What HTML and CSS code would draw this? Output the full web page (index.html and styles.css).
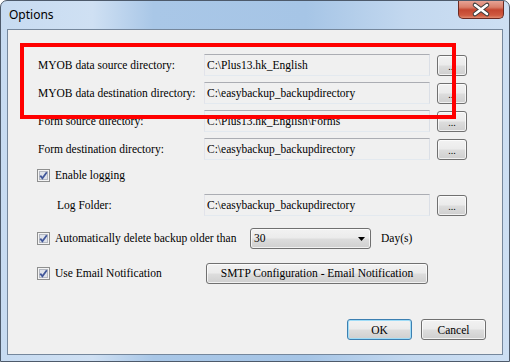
FILE: index.html
```html
<!DOCTYPE html>
<html>
<head>
<meta charset="utf-8">
<link rel="stylesheet" href="styles.css">
</head>
<body>
<div class="window">
  <div class="titlebar">
    <span class="title">Options</span>
    <div class="close">
      <svg width="46" height="19" viewBox="0 0 46 19">
        <path d="M17 5 L29 14 M29 5 L17 14" stroke="#3b3b3b" stroke-width="4.6" stroke-linecap="round"/>
        <path d="M17 5 L29 14 M29 5 L17 14" stroke="#ffffff" stroke-width="2.6" stroke-linecap="round"/>
      </svg>
    </div>
  </div>
  <div class="client">
    <div class="rows">
      <div class="row">
        <span class="label">MYOB data source directory:</span>
        <div class="field">C:\Plus13.hk_English</div>
        <button class="btn browse">...</button>
      </div>
      <div class="row">
        <span class="label">MYOB data destination directory:</span>
        <div class="field">C:\easybackup_backupdirectory</div>
        <button class="btn browse">...</button>
      </div>
      <div class="row">
        <span class="label">Form source directory:</span>
        <div class="field">C:\Plus13.hk_English\Forms</div>
        <button class="btn browse">...</button>
      </div>
      <div class="row">
        <span class="label">Form destination directory:</span>
        <div class="field">C:\easybackup_backupdirectory</div>
        <button class="btn browse">...</button>
      </div>
      <div class="row row-logging">
        <span class="check"><svg width="13" height="13" viewBox="0 0 13 13"><rect x="0.5" y="0.5" width="12" height="12" fill="#f4f4f4" stroke="#8e8f8f"/><rect x="2.5" y="2.5" width="8" height="8" fill="#dfe3ea" stroke="#b4b8c2"/><path d="M3.3 6.6 L5.4 9.2 L9.8 3.2" fill="none" stroke="#41579a" stroke-width="1.8"/></svg></span>
        <span class="check-label">Enable logging</span>
      </div>
      <div class="row row-log">
        <span class="label indent">Log Folder:</span>
        <div class="field">C:\easybackup_backupdirectory</div>
        <button class="btn browse">...</button>
      </div>
      <div class="row row-auto">
        <span class="check"><svg width="13" height="13" viewBox="0 0 13 13"><rect x="0.5" y="0.5" width="12" height="12" fill="#f4f4f4" stroke="#8e8f8f"/><rect x="2.5" y="2.5" width="8" height="8" fill="#dfe3ea" stroke="#b4b8c2"/><path d="M3.3 6.6 L5.4 9.2 L9.8 3.2" fill="none" stroke="#41579a" stroke-width="1.8"/></svg></span>
        <span class="check-label auto-label">Automatically delete backup older than</span>
        <div class="combo"><span>30</span><svg width="7" height="4" viewBox="0 0 7 4"><path d="M0 0 H7 L3.5 4 Z" fill="#000"/></svg></div>
        <span class="days">Day(s)</span>
      </div>
      <div class="row row-email">
        <span class="check"><svg width="13" height="13" viewBox="0 0 13 13"><rect x="0.5" y="0.5" width="12" height="12" fill="#f4f4f4" stroke="#8e8f8f"/><rect x="2.5" y="2.5" width="8" height="8" fill="#dfe3ea" stroke="#b4b8c2"/><path d="M3.3 6.6 L5.4 9.2 L9.8 3.2" fill="none" stroke="#41579a" stroke-width="1.8"/></svg></span>
        <span class="check-label email-label">Use Email Notification</span>
        <button class="btn smtp">SMTP Configuration - Email Notification</button>
      </div>
    </div>
    <div class="footer">
      <button class="btn ok">OK</button>
      <button class="btn cancel">Cancel</button>
    </div>
    <div class="highlight"></div>
  </div>
</div>
</body>
</html>
```
FILE: styles.css
```css
html, body {
  margin: 0;
  padding: 0;
  background: #ffffff;
}
.window {
  width: 510px;
  height: 362px;
  box-sizing: border-box;
  border: 1px solid #4d5a6b;
  border-radius: 7px 7px 0 0;
  padding: 0 6px 6px 6px;
  display: flex;
  flex-direction: column;
  background: linear-gradient(90deg, #c7dbf1 0%, #cfe0f3 18%, #a9c7e7 30%, #a6c5e6 60%, #c3d8ef 80%, #cddff3 100%);
  overflow: hidden;
}
.titlebar {
  height: 28px;
  flex: none;
  display: flex;
  align-items: flex-start;
  justify-content: space-between;
}
.title {
  font-family: "Noto Sans", "Open Sans", sans-serif;
  font-size: 12px;
  color: #000;
  margin-top: 5px;
  margin-left: 2px;
}
.close {
  width: 46px;
  height: 19px;
  margin-top: -1px;
  margin-right: -1px;
  box-sizing: border-box;
  border: 1px solid #6b2a22;
  border-top: none;
  border-radius: 0 0 5px 5px;
  background: linear-gradient(180deg, #e9a99c 0%, #d97e6a 40%, #c44630 55%, #cf5a40 85%, #e08a6f 100%);
  display: flex;
  align-items: center;
  justify-content: center;
}
.close svg {
  display: block;
  margin: -1px;
}
.client {
  position: relative;
  flex: 1;
  border: 1px solid #75879c;
  background: #f0f0f0;
  display: flex;
  flex-direction: column;
  font-family: "Liberation Serif", "Times New Roman", serif;
  font-size: 11.5px;
  color: #000;
}
.rows {
  padding: 24px 0 0 30px;
  display: flex;
  flex-direction: column;
  gap: 6px;
}
.row {
  height: 22px;
  display: flex;
  align-items: center;
}
.row-logging { margin-top: -2px; }
.row-log { margin-top: 2px; }
.row-auto { margin-top: 5px; }
.row-email { margin-top: 7px; }
.label {
  width: 166px;
  flex: none;
  white-space: nowrap;
}
.label.indent {
  padding-left: 19px;
  box-sizing: border-box;
}
.field {
  width: 226px;
  height: 22px;
  box-sizing: border-box;
  border: 1px solid;
  border-color: #abadb3 #dbdfe6 #e3e9ef #e2e3ea;
  background: #f0f0f0;
  padding: 0 0 0 2px;
  display: flex;
  align-items: center;
  white-space: nowrap;
  overflow: hidden;
}
.btn {
  font-family: "Liberation Serif", "Times New Roman", serif;
  font-size: 11.5px;
  color: #000;
  height: 21px;
  box-sizing: border-box;
  border: 1px solid #707070;
  border-radius: 3px;
  background: linear-gradient(180deg, #f2f2f2 0%, #ebebeb 48%, #dddddd 52%, #cfcfcf 100%);
  box-shadow: inset 0 0 0 1px rgba(255,255,255,0.7);
  padding: 0;
  display: flex;
  align-items: center;
  justify-content: center;
}
.browse {
  width: 30px;
  margin-left: 7px;
  flex: none;
  font-size: 10px;
  padding-top: 3px;
}
.check {
  width: 13px;
  height: 13px;
  margin-left: -1px;
  flex: none;
}
.check svg { display: block; }
.check-label {
  margin-left: 5px;
  white-space: nowrap;
}
.auto-label {
  width: 195px;
  flex: none;
}
.email-label {
  width: 151px;
  flex: none;
}
.combo {
  width: 121px;
  height: 21px;
  box-sizing: border-box;
  border: 1px solid #707070;
  border-radius: 3px;
  background: linear-gradient(180deg, #f2f2f2 0%, #ebebeb 48%, #dddddd 52%, #cfcfcf 100%);
  box-shadow: inset 0 0 0 1px rgba(255,255,255,0.7);
  display: flex;
  align-items: center;
  justify-content: space-between;
  padding: 0 5px 0 3px;
  flex: none;
}
.combo svg { display: block; margin-top: 2px; }
.days {
  margin-left: 10px;
}
.smtp {
  width: 222px;
  flex: none;
}
.footer {
  margin-top: auto;
  display: flex;
  justify-content: flex-end;
  gap: 9px;
  padding: 0 16px 14px 0;
}
.ok, .cancel {
  width: 65px;
}
.ok {
  border-color: #3c7fb1;
  box-shadow: inset 0 0 0 1px #9fdcf7;
}
.highlight {
  position: absolute;
  left: 12px;
  top: 13px;
  width: 436px;
  height: 76px;
  box-sizing: border-box;
  border: 4px solid #ff0000;
  pointer-events: none;
}
```
